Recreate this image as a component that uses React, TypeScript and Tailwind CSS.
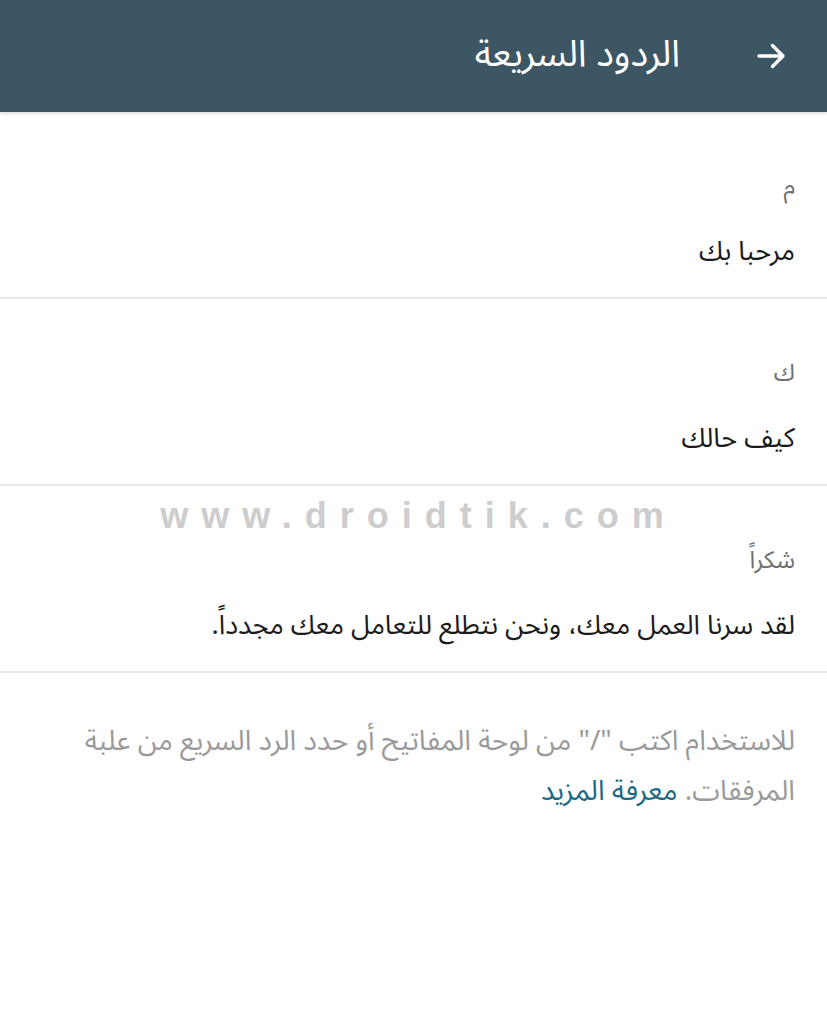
import React from "react";

const font = { fontFamily: '"Noto Sans Arabic", "DejaVu Sans", "Noto Sans", sans-serif' };

const rows = [
  { key: "م", msg: "مرحبا بك" },
  { key: "ك", msg: "كيف حالك" },
  { key: "شكراً", msg: "لقد سرنا العمل معك، ونحن نتطلع للتعامل معك مجدداً." },
];

export default function App() {
  return (
    <div dir="rtl" className="relative w-[827px] h-[1024px] bg-white overflow-hidden" style={font}>
      <div className="h-[112px] bg-[#3d5664] flex items-center pr-[38px] gap-[73px] shadow-[0_2px_3px_rgba(0,0,0,0.12)]">
        <svg width="36" height="36" viewBox="0 0 24 24" fill="none" stroke="white" strokeWidth="2.2" strokeLinecap="round" strokeLinejoin="round">
          <path d="M4 12h16M13 5l7 7-7 7" />
        </svg>
        <div className="text-white text-[37px] leading-none pb-[4px]">الردود السريعة</div>
      </div>
      <div className="flex flex-col">
        {rows.map((r, i) => (
          <div key={i} className="h-[187px] border-b-2 border-[#e8e8e8] px-[32px] pt-[58px] flex flex-col">
            <div className="h-[34px] leading-[34px] text-[24px] text-[#707070]">{r.key}</div>
            <div className="mt-[28px] h-[40px] leading-[40px] text-[27px] text-[#1b1b1b]">{r.msg}</div>
          </div>
        ))}
      </div>
      <div className="px-[32px] pt-[44px] text-[28px] leading-[50px] text-[#9a9a9a]">
        للاستخدام اكتب "/" من لوحة المفاتيح أو حدد الرد السريع من علبة المرفقات. <span className="text-[#1b6a86]">معرفة المزيد</span>
      </div>
      <div dir="ltr" className="absolute top-[489px] left-0 w-full flex justify-center text-[36px] tracking-[13px] text-[#cdcdcd] font-bold" style={{ fontFamily: '"Liberation Sans", Arial, sans-serif' }}>
        <span className="ml-[10px]">www.droidtik.com</span>
      </div>
    </div>
  );
}
